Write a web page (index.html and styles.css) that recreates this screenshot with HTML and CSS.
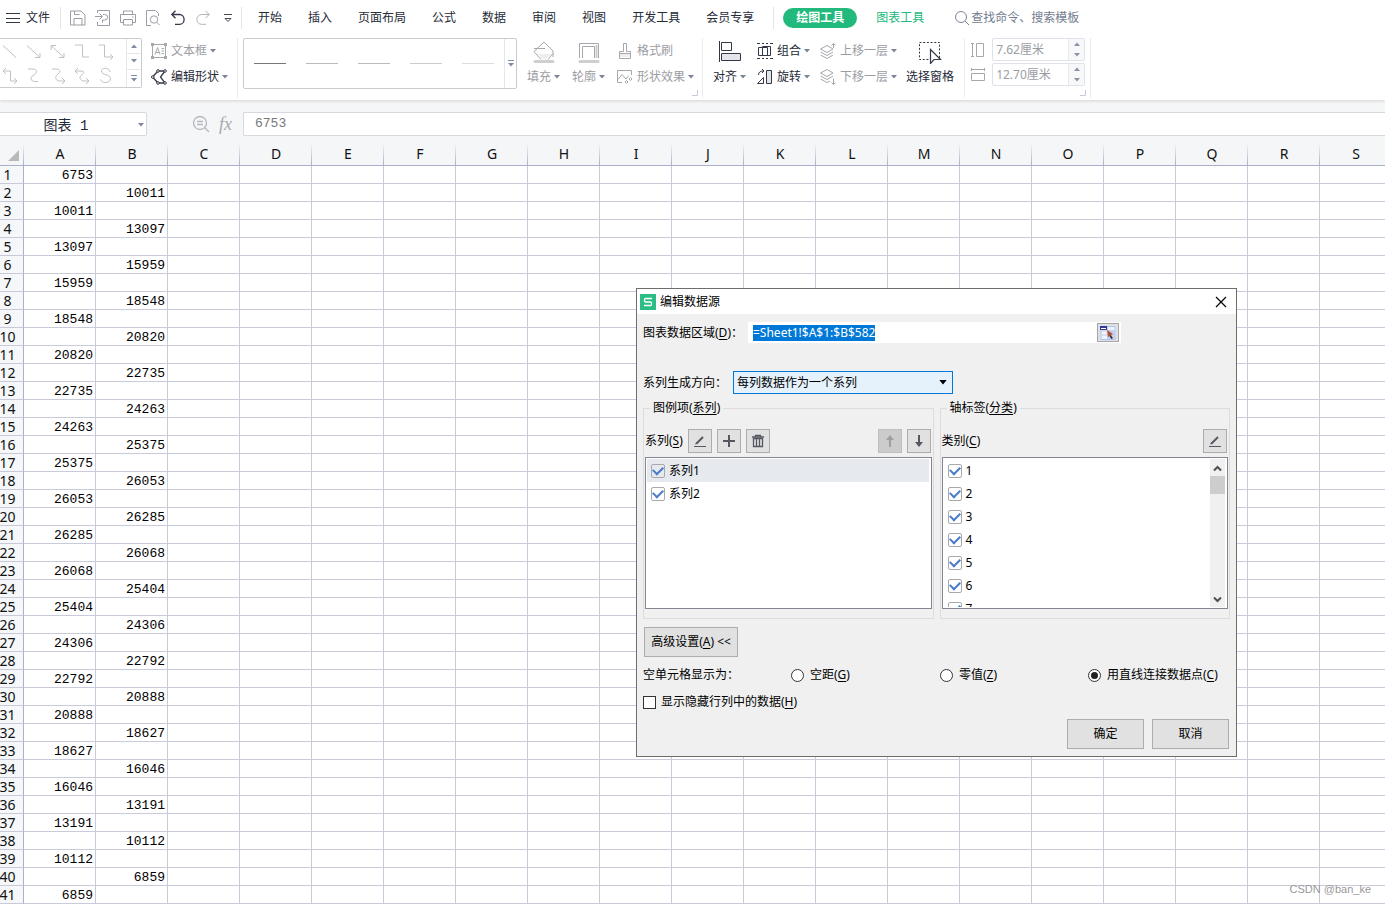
FILE: index.html
```html
<!DOCTYPE html>
<html lang="zh-CN">
<head>
<meta charset="utf-8">
<title>编辑数据源</title>
<link rel="stylesheet" href="styles.css">
</head>
<body>
<svg class="defs" aria-hidden="true">
  <symbol id="caret" viewBox="0 0 6 4"><path d="M0 0h6L3 3.6z" fill="currentColor"/></symbol>
  <symbol id="caret-up" viewBox="0 0 6 4"><path d="M0 4h6L3 .4z" fill="currentColor"/></symbol>
  <symbol id="caret-more" viewBox="0 0 6 7"><path d="M0 0h6v1H0zM0 3h6L3 6.6z" fill="currentColor"/></symbol>
  <symbol id="corner" viewBox="0 0 6 6"><path d="M5.5 0v5.5H0" fill="none" stroke="#c3cada"/></symbol>
  <symbol id="pencil" viewBox="0 0 16 16"><path d="M2 13.5h12" stroke="#555861"/><path d="M4.5 10.5L11 4" stroke="#555861" stroke-width="2"/><path d="M3 11.500l1-2 1.500 1.500z" fill="#555861"/></symbol>
</svg>

<header class="app-head">
  <nav class="tabs">
    <div class="quick">
      <button class="file"><svg width="14" height="12" viewBox="0 0 14 12"><path d="M0 1.500h14M0 6.500h14M0 10.500h14" stroke="#333846"/></svg>文件</button>
      <i class="divider"></i>
      <div class="quick-icons">
        <button aria-label="保存"><svg width="16" height="16" viewBox="0 0 16 16"><path d="M.5 15V1H11l4 4v10zM4 15V8.500h8V15M4.500 1v3.500h5" fill="none" stroke="#9a9da5"/></svg></button>
        <button aria-label="输出"><svg width="16" height="16" viewBox="0 0 16 16"><path d="M2.500 3V.5h12v15h-12V12M0 6.500h7M4.500 3.500l3 3-3 3M7.500 12.500V10h2a3 2.500 0 0 0 0-5.500H8" fill="none" stroke="#9a9da5"/></svg></button>
        <button aria-label="打印"><svg width="16" height="16" viewBox="0 0 16 16"><path d="M3.500 4.500V1h9v3.500M3.500 12.500h-3v-8h15v8h-3M3.500 9.500h9V15h-9zM12 7h1.500" fill="none" stroke="#9a9da5"/></svg></button>
        <button aria-label="打印预览"><svg width="16" height="16" viewBox="0 0 16 16"><path d="M6 15.500H1.500V.5h9l3 3V6" fill="none" stroke="#9a9da5"/><circle cx="9" cy="9.500" r="3.700" fill="none" stroke="#9a9da5"/><path d="M11.700 12.200l3 3" stroke="#9a9da5"/></svg></button>
        <button aria-label="撤销"><svg width="16" height="16" viewBox="0 0 16 16"><path d="M5.500 .8L1.800 4.500l3.700 3.700M2 4.500h7.500a4.500 4.800 0 0 1 0 9.800H5" fill="none" stroke="#333846" stroke-width="1.300"/></svg></button>
        <button aria-label="恢复"><svg width="16" height="16" viewBox="0 0 16 16"><path d="M10.500 .8l3.700 3.700-3.700 3.700M14 4.500H6.500a4.500 4.800 0 0 0 0 9.800H11" fill="none" stroke="#b0b3ba"/></svg></button>
        <button aria-label="更多"><svg width="16" height="16" viewBox="0 0 16 16"><path d="M4 4.500h8M5 8.500l3 3 3-3z" fill="none" stroke="#454955"/></svg></button>
      </div>
      <i class="divider"></i>
    </div>
    <div class="tab-list">
      <button>开始</button><button>插入</button><button>页面布局</button><button>公式</button><button>数据</button><button>审阅</button><button>视图</button><button>开发工具</button><button>会员专享</button>
    </div>
    <i class="divider"></i>
    <button class="tab-active">绘图工具</button>
    <button class="tab-green">图表工具</button>
    <button class="search"><svg width="16" height="16" viewBox="0 0 16 16"><circle cx="7" cy="7" r="5.500" fill="none" stroke="#7b8499"/><path d="M11 11l4 4" stroke="#7b8499"/></svg>查找命令、搜索模板</button>
  </nav>

  <div class="ribbon">
    <div class="shape-gallery">
      <div class="shape-grid">
        <svg viewBox="0 0 16 16"><path d="M1 2l13 12"/></svg>
        <svg viewBox="0 0 16 16"><path d="M1 2l13 12M14 9.500V14H9"/></svg>
        <svg viewBox="0 0 16 16"><path d="M1 2l13 12M14 9.500V14H9M1 6.500V2h5"/></svg>
        <svg viewBox="0 0 16 16"><path d="M1 1.500h7.500v12H15"/></svg>
        <svg viewBox="0 0 16 16"><path d="M1 1.500h5.500v12H15M12 10.500l3 3-3 3"/></svg>
        <svg viewBox="0 0 16 16"><path d="M1 3.500h7.500v10H15M4 .5l-3 3 3 3M12 10.500l3 3-3 3"/></svg>
        <svg viewBox="0 0 16 16"><path d="M2 1.500h4c8 0 4 5 1 6.500s-3 6 2 6h3"/></svg>
        <svg viewBox="0 0 16 16"><path d="M2 1.500h3c8 0 4 4.500 2 6s-2 6 3 6h4.500M12 10.500l3 3-3 3"/></svg>
        <svg viewBox="0 0 16 16"><path d="M1 3.500h5c7 0 3 3 1 4.500s-1 5.500 3 5.500h4.500M4 .5l-3 3 3 3M12 10.500l3 3-3 3"/></svg>
        <svg viewBox="0 0 16 16"><path d="M12 4.500C12 0 3.500-.5 3.500 3.500c0 4.500 9 3 9 7.500 0 5-8.500 5.500-10 1"/></svg>
      </div>
      <div class="gallery-side">
        <button aria-label="上一行"><svg width="6" height="4"><use href="#caret-up"/></svg></button>
        <button aria-label="下一行"><svg width="6" height="4"><use href="#caret"/></svg></button>
        <button aria-label="展开"><svg width="6" height="7"><use href="#caret-more"/></svg></button>
      </div>
    </div>

    <div class="stack text-tools">
      <button class="cmd off"><svg width="16" height="16" viewBox="0 0 16 16"><path d="M1.500 1.500h13v13h-13zM4 11.500l2.500-7 2.500 7M5 9.500h3M10.500 5.500H13M10.500 8H13M10.500 10.500H13" fill="none" stroke="#a6a8ad"/><path d="M0 0h3v3H0zM13 0h3v3h-3zM0 13h3v3H0zM13 13h3v3h-3z" fill="#a6a8ad"/></svg>文本框<svg class="arr" width="6" height="4"><use href="#caret"/></svg></button>
      <button class="cmd"><svg width="16" height="16" viewBox="0 0 16 16"><path d="M14 2H7L1.500 8 7 14h7L9.500 8z" fill="none" stroke="#333846" stroke-width="1.300"/><g fill="#fff" stroke="#333846"><circle cx="1.800" cy="8" r="1.300"/><circle cx="7" cy="2" r="1.300"/><circle cx="14" cy="2" r="1.300"/><circle cx="7" cy="14" r="1.300"/><circle cx="14" cy="14" r="1.300"/></g></svg>编辑形状<svg class="arr" width="6" height="4"><use href="#caret"/></svg></button>
    </div>
    <i class="group-line"></i>

    <div class="line-gallery">
      <div class="line-list"><hr class="l1"><hr class="l2"><hr class="l2"><hr class="l3"><hr class="l4"></div>
      <button aria-label="更多线条"><svg width="6" height="7"><use href="#caret-more"/></svg></button>
    </div>
    <button class="big off fill-cmd"><svg width="24" height="24" viewBox="0 0 24 24"><path d="M6 14h13l-5 5h-4z" fill="#eee"/><path d="M2 11.500L12 2l9 9v6M2 11.500l7 8M16 19.500l5-6M2 8.500h11" fill="none" stroke="#a6a8ad"/><path d="M3 21.500h18" stroke="#cfcfcf" stroke-width="3" stroke-linecap="round"/></svg><span>填充<svg class="arr" width="6" height="4"><use href="#caret"/></svg></span></button>
    <button class="big off"><svg width="24" height="24" viewBox="0 0 24 24"><path d="M2.500 18V3.500h19V18M5.500 18V6.500h12V18" fill="none" stroke="#a6a8ad"/><path d="M19.500 5v13" stroke="#ccc" stroke-width="2"/><path d="M3 21.500h18" stroke="#cfcfcf" stroke-width="3" stroke-linecap="round"/></svg><span>轮廓<svg class="arr" width="6" height="4"><use href="#caret"/></svg></span></button>
    <div class="stack">
      <button class="cmd off"><svg width="16" height="16" viewBox="0 0 16 16"><path d="M3 10h10v4H3z" fill="#eee"/><path d="M2.500 15.500v-7h4v-8h3v8h4v7zM2.500 10.500h11" fill="none" stroke="#a6a8ad"/></svg>格式刷</button>
      <button class="cmd off"><svg width="16" height="16" viewBox="0 0 16 16"><path d="M5 13.500H.5V1.500h14V6M1 10.500l4-5 4 4.500 3-3.500M8 13l1.500-1.500L11 13l-1.500 1.500zM12 10l1.500-1.500L15 10l-1.500 1.500z" fill="none" stroke="#a6a8ad"/></svg>形状效果<svg class="arr" width="6" height="4"><use href="#caret"/></svg></button>
    </div>
    <i class="group-line cornered"><svg width="6" height="6"><use href="#corner"/></svg></i>

    <button class="big align-cmd"><svg width="24" height="24" viewBox="0 0 24 24"><path d="M1.500 1v21M3.500 2.500h10v8h-10z" fill="none" stroke="#333846"/><path d="M3.500 13.500h19v7h-19z" fill="#e3e5e8" stroke="#333846"/></svg><span>对齐<svg class="arr" width="6" height="4"><use href="#caret"/></svg></span></button>
    <div class="stack">
      <button class="cmd"><svg width="16" height="16" viewBox="0 0 16 16"><path d="M1.500 4.500h9v8h-9zM5.500 3.500h8v9h-8z" fill="none" stroke="#333846"/><path d="M0 .5h3M5 .5h2M9 .5h2M13 .5h3M0 15.500h3M5 15.500h2M9 15.500h2M13 15.500h3" stroke="#333846"/></svg>组合<svg class="arr" width="6" height="4"><use href="#caret"/></svg></button>
      <button class="cmd"><svg width="16" height="16" viewBox="0 0 16 16"><path d="M.5 14.500h6v-6z" fill="none" stroke="#333846"/><path d="M9.500 1.500h5v13h-5z" fill="#e3e5e8" stroke="#333846"/><path d="M1.500 6c0-3 2-4 5-4M5 0l2 2-2 2" fill="none" stroke="#333846"/></svg>旋转<svg class="arr" width="6" height="4"><use href="#caret"/></svg></button>
    </div>
    <div class="stack">
      <button class="cmd off"><svg width="16" height="16" viewBox="0 0 16 16"><path d="M.5 6L7 2.500 13 6 7 9.500zM.5 9L7 12.500 13 9M.5 12L7 15.500 13 12M13.500 5V.5M11.500 2.500l2-2 2 2" fill="none" stroke="#a6a8ad"/></svg>上移一层<svg class="arr" width="6" height="4"><use href="#caret"/></svg></button>
      <button class="cmd off"><svg width="16" height="16" viewBox="0 0 16 16"><path d="M.5 4L7 .5 13 4 7 7.500zM.5 7L7 10.500 13 7M.5 10L7 13.500l3-1.500M13.500 9.500v6M11.500 13.500l2 2 2-2" fill="none" stroke="#a6a8ad"/></svg>下移一层<svg class="arr" width="6" height="4"><use href="#caret"/></svg></button>
    </div>
    <button class="big pane-cmd"><svg width="24" height="24" viewBox="0 0 24 24"><path d="M1.500 2.500h20v17h-20z" fill="none" stroke="#333846" stroke-dasharray="2 1.700"/><path d="M12.500 9.500v14l3.500-4h6.500z" fill="#fff" stroke="#333846" stroke-width="1.200"/></svg><span>选择窗格</span></button>
    <i class="group-line"></i>

    <div class="sizes">
      <label for="h"><svg width="16" height="16" viewBox="0 0 16 16"><path d="M1 1.500h3M1 14.500h3M2.500 1.500v13M6.500 1.500h7v13h-7z" fill="none" stroke="#a6a8ad"/></svg></label>
      <div class="spin"><input id="h" aria-label="高度" value="7.62厘米"><div><button aria-label="增加"><svg width="6" height="4"><use href="#caret-up"/></svg></button><button aria-label="减少"><svg width="6" height="4"><use href="#caret"/></svg></button></div></div>
      <label for="w"><svg width="16" height="16" viewBox="0 0 16 16"><path d="M1.500 1v3M14.500 1v3M1.500 2.500h13M1.500 6.500h13v7h-13z" fill="none" stroke="#a6a8ad"/></svg></label>
      <div class="spin"><input id="w" aria-label="宽度" value="12.70厘米"><div><button aria-label="增加"><svg width="6" height="4"><use href="#caret-up"/></svg></button><button aria-label="减少"><svg width="6" height="4"><use href="#caret"/></svg></button></div></div>
    </div>
    <i class="group-line cornered"><svg width="6" height="6"><use href="#corner"/></svg></i>
  </div>
</header>

<section class="formula">
  <div class="name-box"><input aria-label="名称框" value="图表 1"><svg width="6" height="4"><use href="#caret"/></svg></div>
  <div class="fx">
    <svg width="18" height="18" viewBox="0 0 18 18"><circle cx="8" cy="8" r="6.500" fill="none" stroke="#b5b7bc" stroke-width="1.300"/><path d="M5 6.500h6M5 9.500h6M12.500 12.500l4.500 4.500" stroke="#b5b7bc" stroke-width="1.300"/></svg>
    <em>fx</em>
  </div>
  <input class="formula-input" aria-label="编辑栏" value="6753">
</section>

<main class="sheet">
  <table>
    <thead><tr id="columns"><th class="corner-cell"><svg width="11" height="11" viewBox="0 0 11 11"><path d="M11 0v11H0z" fill="#b9b9b9"/></svg></th></tr></thead>
    <tbody id="rows"></tbody>
  </table>
</main>

<section class="dialog" role="dialog" aria-labelledby="dialog-title">
  <header class="dialog-head">
    <svg width="16" height="16" viewBox="0 0 16 16"><path d="M0 0h16v16H0z" fill="#2bbd83"/><path d="M12 4.500H5.500a1 1 0 0 0-1 1V7a1 1 0 0 0 1 1h5a1 1 0 0 1 1 1v1.500a1 1 0 0 1-1 1H4" fill="none" stroke="#fff" stroke-width="1.300"/></svg>
    <h1 id="dialog-title">编辑数据源</h1>
    <button aria-label="关闭"><svg width="12" height="12" viewBox="0 0 12 12"><path d="M1 1l10 10M11 1L1 11" stroke="#000" stroke-width="1.200"/></svg></button>
  </header>
  <form class="dialog-body">
    <div class="range-row">
      <label for="range">图表数据区域(<u>D</u>)：</label>
      <div class="range-box"><input id="range" value="=Sheet1!$A$1:$B$582"><button type="button" aria-label="选取区域"><svg width="16" height="14" viewBox="0 0 16 14"><path d="M1 .5h14v13H1z" fill="#eef4ff" stroke="#a9c6f5"/><path d="M8 4h7v9H8z" fill="#bcd4fb"/><path d="M1 5h14M1 9h14M7.500 1v12" stroke="#c9cdd5"/><path d="M0 0h7v4H0z" fill="#33379b"/><path d="M1 2h5v1H1z" fill="#fff"/><path d="M7 4l6 4-2 1 2 3-1.500 1-2-3L8 11z" fill="#b5523c"/><path d="M10.500 9l2 3-1 1-2-3z" fill="#333"/></svg></button></div>
    </div>
    <div class="direction-row">
      <label for="direction">系列生成方向：</label>
      <div class="select-box"><select id="direction"><option>每列数据作为一个系列</option></select><svg width="8" height="5" viewBox="0 0 6 4"><use href="#caret"/></svg></div>
    </div>
    <div class="panels">
      <fieldset>
        <legend>图例项(<u>系列</u>)</legend>
        <div class="bar">
          <span>系列(<u>S</u>)</span>
          <button type="button" aria-label="编辑"><svg width="16" height="16"><use href="#pencil"/></svg></button>
          <button type="button" aria-label="添加"><svg width="16" height="16" viewBox="0 0 16 16"><path d="M8 2v12M2 8h12" stroke="#555861" stroke-width="2"/></svg></button>
          <button type="button" aria-label="删除"><svg width="16" height="16" viewBox="0 0 16 16"><path d="M3.500 5.500h9v8h-9zM6.500 6v8M9.500 6v8M5.500 4V2.500h5V4" fill="none" stroke="#555861" stroke-width="1.300"/><path d="M2 4h12" stroke="#555861" stroke-width="1.500"/></svg></button>
          <button type="button" class="up" disabled aria-label="上移"><svg width="16" height="16" viewBox="0 0 16 16"><path d="M8 4v10" stroke="#a0a0a0" stroke-width="2"/><path d="M4 7l4-5 4 5z" fill="#a0a0a0"/></svg></button>
          <button type="button" aria-label="下移"><svg width="16" height="16" viewBox="0 0 16 16"><path d="M8 2v10" stroke="#555861" stroke-width="2"/><path d="M4 9l4 5 4-5z" fill="#555861"/></svg></button>
        </div>
        <div class="list">
          <div class="items">
            <label class="picked"><input type="checkbox" checked>系列1</label>
            <label><input type="checkbox" checked>系列2</label>
          </div>
        </div>
      </fieldset>
      <fieldset>
        <legend>轴标签(<u>分类</u>)</legend>
        <div class="bar category-bar">
          <span>类别(<u>C</u>)</span>
          <button type="button" class="up" aria-label="编辑类别"><svg width="16" height="16"><use href="#pencil"/></svg></button>
        </div>
        <div class="list">
          <div class="items">
            <label><input type="checkbox" checked>1</label>
            <label><input type="checkbox" checked>2</label>
            <label><input type="checkbox" checked>3</label>
            <label><input type="checkbox" checked>4</label>
            <label><input type="checkbox" checked>5</label>
            <label><input type="checkbox" checked>6</label>
            <label><input type="checkbox" checked>7</label>
          </div>
          <div class="scroll">
            <svg width="15" height="17" viewBox="0 0 15 17"><path d="M4 11.500L7.500 8l3.500 3.500" fill="none" stroke="#505050" stroke-width="2"/></svg>
            <i></i>
            <svg class="down" width="15" height="17" viewBox="0 0 15 17"><path d="M4 7.500L7.500 11 11 7.500" fill="none" stroke="#505050" stroke-width="2"/></svg>
          </div>
        </div>
      </fieldset>
    </div>
    <button type="button" class="push advanced">高级设置(<u>A</u>) &lt;&lt;</button>
    <div class="radio-row">
      <span>空单元格显示为：</span>
      <label><input type="radio" name="empty"><span>空距(<u>G</u>)</span></label>
      <label><input type="radio" name="empty"><span>零值(<u>Z</u>)</span></label>
      <label><input type="radio" name="empty" checked><span>用直线连接数据点(<u>C</u>)</span></label>
    </div>
    <label class="hidden-row"><input type="checkbox"><span>显示隐藏行列中的数据(<u>H</u>)</span></label>
    <div class="actions"><button type="button" class="push">确定</button><button type="button" class="push">取消</button></div>
  </form>
</section>
<p class="watermark">CSDN @ban_ke</p>
<script src="script.js"></script>
</body>
</html>
```
FILE: styles.css
```css
* { box-sizing: border-box; }
body {
  margin: 0;
  height: 100vh;
  display: flex;
  flex-direction: column;
  position: relative;
  overflow: hidden;
  background: #fff;
  color: #262b38;
  font: 12px/16px "Noto Sans", "Noto Sans CJK SC", sans-serif;
}
button, input, select { font: inherit; color: inherit; margin: 0; }
button { border: 0; padding: 0; background: none; white-space: nowrap; }
svg { display: block; flex: none; }
.defs { position: absolute; width: 0; height: 0; }

/* tabs */
.app-head { position: relative; z-index: 1; background: #fff; box-shadow: 0 1px 3px rgba(0, 0, 0, .14); }
.tabs { display: flex; align-items: center; height: 34px; padding-top: 1px; }
.quick { display: flex; align-items: center; padding-left: 6px; }
.file { display: flex; align-items: center; gap: 6px; }
.divider { width: 1px; height: 22px; background: #e3e4e8; }
.quick .divider:first-of-type { margin-left: 10px; }
.quick-icons { display: flex; gap: 9px; padding: 0 5px 0 9px; }
.tab-list { display: flex; gap: 26px; padding: 0 19px 0 16px; }
.tab-active { width: 74px; height: 20px; margin-left: 9px; border-radius: 10px; background: #21b97c; color: #fff; font-weight: bold; line-height: 20px; }
.tab-green { margin-left: 19px; color: #21b97c; }
.search { display: flex; align-items: center; gap: 1px; margin-left: 30px; color: #737c91; }

/* ribbon */
.ribbon { display: flex; align-items: flex-start; height: 66px; padding-top: 4px; }
.arr { margin-left: -1px; color: #7c8494; }
.group-line { position: relative; width: 1px; height: 60px; background: #ebecef; }
.cornered svg { position: absolute; right: 5px; bottom: 2px; }
.shape-gallery { display: flex; width: 142px; height: 50px; border: 1px solid #c9cbd0; border-left: 0; border-radius: 0 2px 2px 0; }
.shape-grid { flex: 1; display: grid; grid-template-columns: repeat(5, 24px); align-items: center; padding-left: 2px; }
.shape-grid svg { width: 16px; height: 17px; fill: none; stroke: #bfc1c5; overflow: visible; }
.gallery-side { display: grid; width: 15px; border-left: 1px solid #e6e7ea; color: #7d8ba3; }
.gallery-side button { display: grid; place-items: center; }
.gallery-side button + button { border-top: 1px solid #e6e7ea; }
.stack { display: grid; grid-auto-rows: 26px; align-items: center; }
.cmd { display: flex; align-items: center; gap: 4px; height: 24px; }
.off { color: #9b9da3; }
.text-tools { padding: 0 9px; }
.line-gallery { display: flex; width: 274px; height: 51px; margin-left: 5px; border: 1px solid #c9cbd0; border-radius: 2px; }
.line-list { flex: 1; display: flex; align-items: center; gap: 20px; padding-left: 10px; }
.line-list hr { width: 32px; margin: 0; border: 0; border-top: 1px solid #ccc; }
.line-list .l1 { border-color: #777; }
.line-list .l2 { border-color: #bbb; }
.line-list .l4 { border-color: #ddd; }
.line-gallery button { display: grid; place-items: center; width: 12px; border-left: 1px solid #e6e7ea; color: #7d8ba3; }
.big { display: grid; justify-items: center; gap: 5px; padding-top: 2px; margin-right: 12px; }
.big span { display: flex; align-items: center; gap: 4px; }
.fill-cmd { margin-left: 10px; }
.ribbon .cornered { margin-left: 8px; }
.align-cmd { margin-left: 10px; }
.align-cmd + .stack { margin-right: 10px; }
.align-cmd { margin-right: 11px; }
.align-cmd + .stack + .stack { margin-right: 9px; }
.pane-cmd { margin-right: 10px; }
.sizes { display: grid; grid-template-columns: 16px 93px; gap: 2px 6px; align-items: center; padding-left: 5px; }
.spin { display: flex; height: 23px; border: 1px solid #dfe2ea; border-radius: 2px; color: #9b9da3; }
.spin input { width: 75px; border: 0; padding: 0 3px; background: none; }
.spin div { flex: 1; display: grid; border-left: 1px solid #e6e8ee; background: #f7f8fa; color: #8b93a5; }
.spin button { display: grid; place-items: center; }
.ribbon .sizes + .cornered { margin-left: 5px; }

/* formula bar */
.formula { display: flex; align-items: center; height: 43px; padding-top: 5px; background: #f5f6f8; }
.name-box { position: relative; width: 147px; }
.name-box input { display: block; width: 100%; height: 24px; border: 1px solid #d6d8de; border-left: 0; border-radius: 0 2px 2px 0; padding: 0 14px 0 0; text-align: center; background: #fff; font: 14px/20px "Liberation Mono", "Noto Sans CJK SC", monospace; }
.name-box svg { position: absolute; right: 3px; top: 11px; color: #7d8699; }
.fx { display: flex; align-items: center; gap: 9px; width: 96px; padding-left: 45px; color: #a7a9af; }
.fx em { font: italic 18px/20px "Liberation Serif", serif; }
.formula-input { flex: 1; min-width: 0; height: 24px; border: 1px solid #d6d8de; border-right: 0; border-radius: 2px 0 0 2px; padding: 0 11px 2px; background: #fff; color: #777; font: 13px/20px "Liberation Mono", monospace; }

/* sheet */
.sheet { flex: 1; min-height: 0; overflow: hidden; }
.sheet table { width: max-content; table-layout: fixed; border-collapse: separate; border-spacing: 0; }
.sheet th { padding: 0; background: #f5f7f9; font-size: 14px; font-weight: normal; line-height: 17px; color: #111; }
.sheet thead th {
  width: 72px; min-width: 72px; height: 23px; padding-bottom: 1px;
  border-bottom: 1px solid #a8b1c8;
  background: linear-gradient(#f5f6f8, #a8b1c8) right / 1px 100% no-repeat #f5f6f8;
}
.sheet thead .corner-cell { width: 24px; min-width: 24px; padding: 3px 5px 0 8px; }
.sheet tbody th { width: 24px; padding-right: 8px; border-right: 1px solid #a8b1c8; border-bottom: 1px solid #c5c9d8; }
.sheet tbody th span { display: flex; justify-content: center; width: 15px; }
.sheet td { height: 18px; padding: 3px 2px 0 0; border-right: 1px solid #c8ccda; border-bottom: 1px solid #c8ccda; text-align: right; color: #000; font: 13px/14px "Liberation Mono", monospace; }

/* dialog */
.dialog { position: absolute; z-index: 2; left: 636px; top: 288px; width: 601px; border: 1px solid #6d6d6d; background: #f0f0f0; color: #000; }
.dialog-head { display: flex; align-items: center; gap: 4px; height: 25px; padding: 0 9px 0 3px; background: #fff; }
.dialog-head h1 { flex: 1; margin: 0; font-size: 12px; font-weight: normal; }
.dialog-body { display: flex; flex-direction: column; padding: 8px 6px 7px; }
.dialog-body u { text-underline-offset: 2px; }
.range-row, .direction-row { display: flex; align-items: center; }
.range-row label { width: 105px; }
.range-box { display: flex; align-items: center; width: 373px; height: 21px; background: #fff; padding: 0 2px 0 5px; }
.range-box input { flex: 1; min-width: 0; border: 0; padding: 0; outline: 0; background: none; }
.range-box input::selection { background: #0078d7; color: #fff; }
.range-box button { display: grid; place-items: center; width: 22px; height: 19px; border: 1px solid #a5a5a5; background: #e1e1e1; }
.direction-row { margin-top: 28px; }
.direction-row label { width: 90px; }
.select-box { position: relative; width: 220px; }
.select-box select { display: block; width: 100%; height: 23px; appearance: none; border: 1px solid #0078d7; border-radius: 0; padding: 0 3px; background: #e5f1fb; }
.select-box svg { position: absolute; right: 6px; top: 9px; }
.panels { display: grid; grid-template-columns: 1fr 1fr; gap: 6px; margin-top: 6px; }
fieldset { min-width: 0; margin: 0; padding: 0 1px 9px; border: 1px solid #dcdcdc; }
legend { margin-left: 5px; padding: 0 3px; }
.bar { display: flex; align-items: center; gap: 5px; margin-top: 13px; padding-right: 1px; }
.bar button { display: grid; place-items: center; width: 24px; height: 24px; border: 1px solid #adadad; background: #e1e1e1; }
.bar button:disabled { border-color: #bfbfbf; background: #ccc; }
.bar .up { margin-left: auto; }
.list { display: flex; height: 152px; margin-top: 4px; border: 1px solid #828790; background: #fff; padding: 1px 2px 1px 1px; overflow: hidden; }
.items { flex: 1; overflow: hidden; }
.items label { display: flex; align-items: center; gap: 4px; height: 23px; padding-left: 4px; }
.items .picked { background: #e6e9ee; }
.items input { appearance: none; display: grid; place-items: center; width: 14px; height: 14px; border: 1px solid #a9a9ad; border-radius: 2px; background: #fff; }
.items .picked input { background: #e6e9ee; }
.items input:checked::before { content: ""; width: 8px; height: 5px; border: solid #4a7cc9; border-width: 0 0 2px 2px; transform: rotate(-45deg); margin-bottom: 3px; }
.scroll { display: flex; flex-direction: column; width: 15px; background: #f0f0f0; }
.scroll i { height: 18px; background: #cdcdcd; }
.scroll .down { margin-top: auto; }
.push { height: 30px; border: 1px solid #adadad; background: #e1e1e1; }
.advanced { align-self: flex-start; width: 94px; margin: 8px 0 0 1px; }
.radio-row { display: grid; grid-template-columns: 148px 149px 148px auto; margin-top: 10px; white-space: nowrap; }
.radio-row label { display: flex; align-items: center; gap: 6px; }
.radio-row input { appearance: none; display: grid; place-items: center; width: 13px; height: 13px; border: 1px solid #333; border-radius: 50%; background: #fff; }
.radio-row input:checked::before { content: ""; width: 7px; height: 7px; border-radius: 50%; background: #222; }
.hidden-row { display: flex; align-items: center; gap: 5px; margin-top: 11px; }
.hidden-row input { appearance: none; width: 13px; height: 13px; border: 1px solid #333; background: #fff; }
.actions { display: flex; justify-content: flex-end; gap: 8px; margin: 9px 1px 0 0; }
.actions .push { width: 77px; }
.watermark { position: absolute; right: 14px; bottom: 7px; margin: 0; color: #999; font: 11px/16px "Liberation Sans", sans-serif; }
```
FILE: script.js
```js
const values = [6753, 10011, 13097, 15959, 18548, 20820, 22735, 24263, 25375, 26053, 26285,
  26068, 25404, 24306, 22792, 20888, 18627, 16046, 13191, 10112, 6859];
const letters = "ABCDEFGHIJKLMNOPQRS";

const columns = document.getElementById("columns");
for (const letter of letters) {
  const th = document.createElement("th");
  th.textContent = letter;
  columns.append(th);
}

// Odd rows hold a value in column A; even rows hold the next value in column B.
const rows = document.getElementById("rows");
for (let r = 1; r <= 41; r++) {
  const tr = rows.insertRow();
  const th = document.createElement("th");
  const number = document.createElement("span");
  number.textContent = r;
  th.append(number);
  tr.append(th);
  for (let c = 0; c < letters.length; c++) {
    const td = tr.insertCell();
    if (c === 0 && r % 2 === 1) td.textContent = values[(r - 1) / 2];
    if (c === 1 && r % 2 === 0) td.textContent = values[r / 2];
  }
}

const range = document.getElementById("range");
range.focus();
range.select();
```
